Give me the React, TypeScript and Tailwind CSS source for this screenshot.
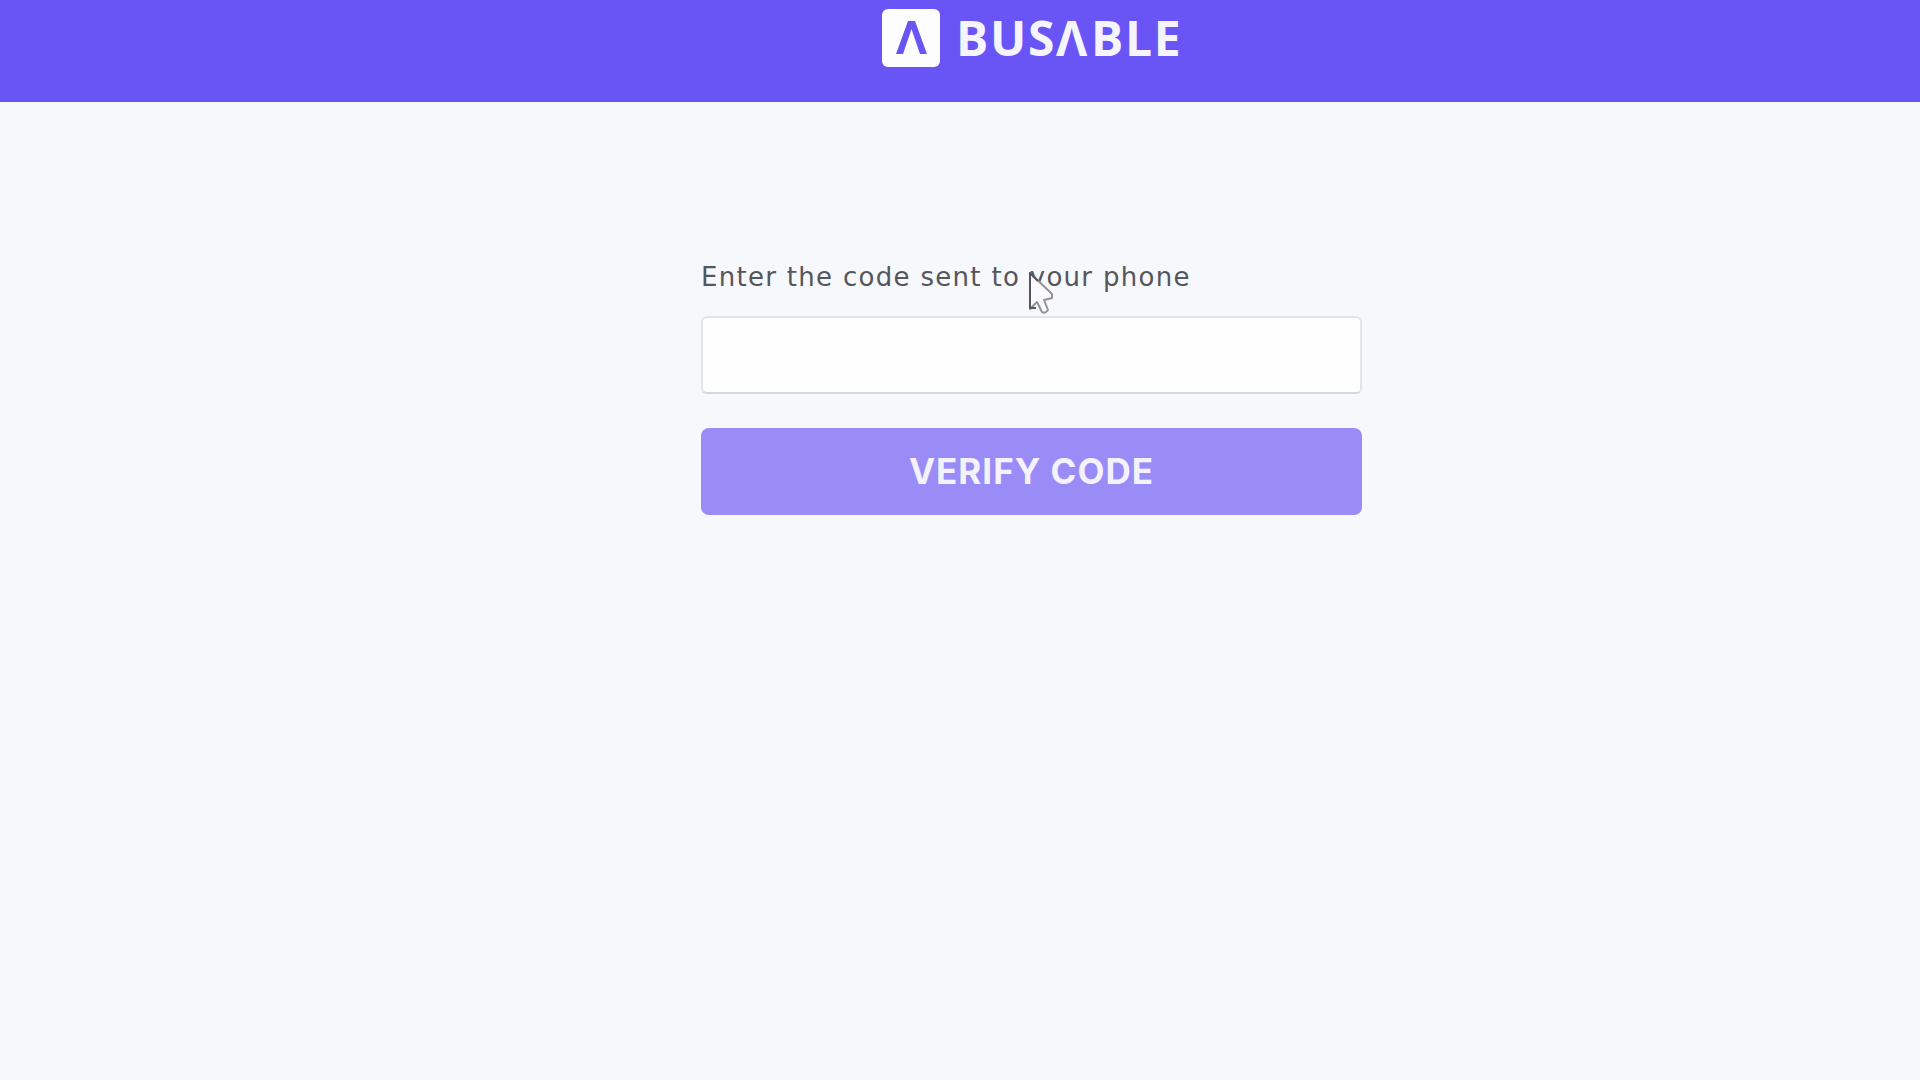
import { useState } from "react";

function Logo() {
  return (
    <div className="flex items-center">
      <div className="flex h-[58px] w-[58px] items-center justify-center rounded-md bg-[#fdfdff]">
        <svg width="31" height="33" viewBox="0 0 31 33" fill="#6954f6">
          <path d="M12 0h7l12 33h-7L15.500 8 7 33H0z" />
        </svg>
      </div>
      <span className="ml-[16px] w-[224px] whitespace-nowrap pt-px font-['Open_Sans',sans-serif] text-[48px] leading-[58px] font-bold tracking-[1.7px] text-[#f6f5ff]">
        BUS<span className="mr-[2px]">Λ</span>BLE
      </span>
    </div>
  );
}

function Cursor() {
  return (
    <svg
      className="pointer-events-none absolute top-[271px] left-[1028px]"
      width="28"
      height="44"
      viewBox="0 0 28 44"
      fill="#fbfbfd"
      strokeLinejoin="round"
    >
      <path d="M2 2v36l7-7 5 10q3 2 6-2l-4-10 8-2v-4z" stroke="#929298" strokeWidth="2" />
      <path d="M8 37H2V2l8 8" fill="none" stroke="#55555b" strokeWidth="2" />
    </svg>
  );
}

export default function App() {
  const [code, setCode] = useState("");

  return (
    <div className="relative h-[1080px] w-[1920px] overflow-hidden bg-[#f6f8fc] font-['Inter',sans-serif]">
      <header className="flex h-[102px] justify-center bg-[#6954f6] pt-[8px] pl-[142px]">
        <div className="h-[58px]">
          <Logo />
        </div>
      </header>

      <form
        className="ml-[701px] flex w-[661px] flex-col pt-[157px]"
        onSubmit={(e) => e.preventDefault()}
      >
        <label
          htmlFor="code"
          className="h-[57px] whitespace-nowrap font-['DejaVu_Sans',sans-serif] text-[26px] leading-[36px] tracking-[1.3px] text-[#55565b]"
        >
          Enter the code sent to your phone
        </label>
        <input
          id="code"
          value={code}
          onChange={(e) => setCode(e.target.value)}
          className="h-[78px] rounded-md border-2 border-[#e3e4e9] border-b-[#d6d7dc] bg-[#fefefe] px-4 text-[27px] outline-none"
        />
        <button
          type="submit"
          className="mt-[34px] h-[87px] rounded-lg bg-[#9a8cf7] text-[35px] leading-[87px] font-bold tracking-[1px] text-[#f4f2ff]"
        >
          VERIFY CODE
        </button>
      </form>

      <Cursor />
    </div>
  );
}
